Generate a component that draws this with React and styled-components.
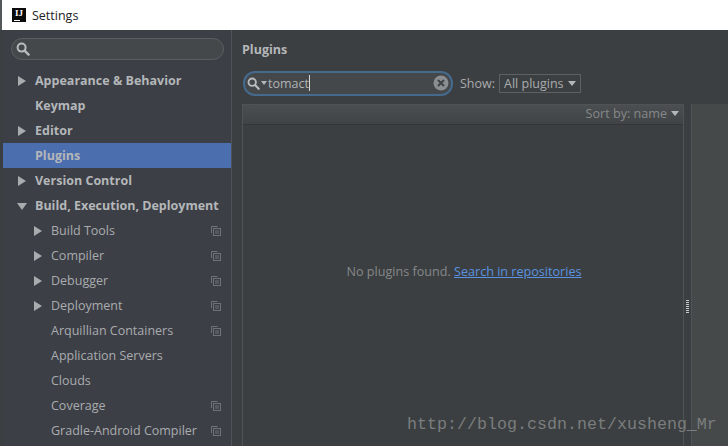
import React from 'react';
import styled, { createGlobalStyle } from 'styled-components';

const GlobalStyle = createGlobalStyle`
  html, body {
    margin: 0;
    padding: 0;
    width: 728px;
    height: 446px;
    overflow: hidden;
    background: #3c3f41;
    font-family: "Open Sans", "Noto Sans", "Liberation Sans", sans-serif;
  }
`;

const topItems = [
  { label: 'Appearance & Behavior', arrow: 'right' },
  { label: 'Keymap' },
  { label: 'Editor', arrow: 'right' },
  { label: 'Plugins', selected: true },
  { label: 'Version Control', arrow: 'right' },
  { label: 'Build, Execution, Deployment', arrow: 'down' },
];

const subItems = [
  { label: 'Build Tools', arrow: 'right', copy: true },
  { label: 'Compiler', arrow: 'right', copy: true },
  { label: 'Debugger', arrow: 'right', copy: true },
  { label: 'Deployment', arrow: 'right', copy: true },
  { label: 'Arquillian Containers', copy: true },
  { label: 'Application Servers' },
  { label: 'Clouds' },
  { label: 'Coverage', copy: true },
  { label: 'Gradle-Android Compiler', copy: true },
];

const SearchIcon = ({ size = 14, color = '#b9bcbe' }) => (
  <svg width={size} height={size} viewBox="0 0 14 14" fill="none">
    <circle cx="5.6" cy="5.6" r="4" stroke={color} strokeWidth="2" />
    <path d="M8.6 8.6L12.6 12.6" stroke={color} strokeWidth="2.4" strokeLinecap="round" />
  </svg>
);

const ProjectIcon = () => (
  <svg width="10" height="10" viewBox="0 0 10 10" fill="none" stroke="#6f7377">
    <path d="M6.5 0.5H0.5V7" />
    <rect x="2.5" y="2.5" width="7" height="7" />
    <path d="M4 5h4M4 7h4" />
  </svg>
);

const ClearIcon = () => (
  <svg width="16" height="16" viewBox="0 0 16 16">
    <circle cx="8" cy="8" r="7.5" fill="#8b8e90" />
    <path d="M5 5l6 6M11 5l-6 6" stroke="#3f4244" strokeWidth="2" />
  </svg>
);

export default function App() {
  return (
    <Window>
      <GlobalStyle />
      <TitleBar>
        <Logo>
          IJ
          <LogoBar />
        </Logo>
        <TitleText>Settings</TitleText>
      </TitleBar>
      <Body>
        <Sidebar>
          <SideSearch>
            <SearchIcon />
          </SideSearch>
          <Tree>
            {topItems.map(item => (
              <Row key={item.label} selected={item.selected}>
                <Arrow dir={item.arrow} />
                <TopLabel>{item.label}</TopLabel>
              </Row>
            ))}
            {subItems.map(item => (
              <SubRow key={item.label}>
                <Arrow dir={item.arrow} />
                <SubLabel>{item.label}</SubLabel>
                {item.copy && (
                  <CopyBox>
                    <ProjectIcon />
                  </CopyBox>
                )}
              </SubRow>
            ))}
          </Tree>
        </Sidebar>
        <Main>
          <Heading>Plugins</Heading>
          <Toolbar>
            <SearchField>
              <SearchIcon size={13} />
              <SmallCaret />
              <SearchText>tomact</SearchText>
              <Cursor />
              <ClearSlot>
                <ClearIcon />
              </ClearSlot>
            </SearchField>
            <ShowLabel>Show:</ShowLabel>
            <ShowSelect>
              All plugins
              <BigCaret />
            </ShowSelect>
          </Toolbar>
          <Content>
            <ListPanel>
              <ListHeader>
                Sort by: name
                <BigCaret />
              </ListHeader>
              <EmptyArea>
                <EmptyText>
                  No plugins found. <RepoLink>Search in repositories</RepoLink>
                </EmptyText>
              </EmptyArea>
            </ListPanel>
            <Splitter>
              <Grip />
            </Splitter>
            <DetailPanel />
          </Content>
        </Main>
      </Body>
      <Watermark>http://blog.csdn.net/xusheng_Mr</Watermark>
    </Window>
  );
}

const Window = styled.div`
  position: relative;
  width: 728px;
  height: 446px;
  overflow: hidden;
  display: flex;
  flex-direction: column;
`;

const TitleBar = styled.div`
  height: 30px;
  flex: none;
  display: flex;
  align-items: center;
  padding-left: 10px;
  gap: 6px;
  background: #ffffff;
  border-left: 2px solid #55585a;
  box-sizing: border-box;
`;

const Logo = styled.div`
  position: relative;
  width: 14px;
  height: 14px;
  background: #0b0b0b;
  color: #ffffff;
  font: bold 9px/11px "Liberation Serif", serif;
  text-align: center;
`;

const LogoBar = styled.span`
  position: absolute;
  left: 2px;
  bottom: 1px;
  width: 6px;
  height: 1px;
  background: #ffffff;
`;

const TitleText = styled.span`
  font-size: 12.5px;
  color: #222222;
`;

const Body = styled.div`
  flex: 1;
  display: flex;
  min-height: 0;
`;

const Sidebar = styled.div`
  width: 229px;
  flex: none;
  box-sizing: border-box;
  margin-left: 3px;
  background: #3d3f46;
  border-right: 1px solid #505356;
`;

const SideSearch = styled.div`
  margin: 8px 7px 0 8px;
  height: 22px;
  box-sizing: border-box;
  border: 1px solid #5c5f61;
  border-radius: 11px;
  background: #45484a;
  display: flex;
  align-items: center;
  padding-left: 4px;
`;

const Tree = styled.div`
  margin-top: 8px;
`;

const Row = styled.div`
  height: 25px;
  display: flex;
  align-items: center;
  padding-left: 14px;
  background: ${p => (p.selected ? '#4b6eaf' : 'transparent')};
`;

const SubRow = styled(Row)`
  padding-left: 30px;
`;

const Arrow = styled.span`
  width: 18px;
  flex: none;
  height: 10px;
  position: relative;
  &::before {
    content: '';
    position: absolute;
    display: ${p => (p.dir ? 'block' : 'none')};
    left: ${p => (p.dir === 'down' ? '0' : '1px')};
    top: ${p => (p.dir === 'down' ? '2px' : '0')};
    border-style: solid;
    border-color: transparent;
    ${p =>
      p.dir === 'down'
        ? 'border-width: 7px 5px 0 5px; border-top-color: #a9acae;'
        : 'border-width: 5px 0 5px 8px; border-left-color: #a9acae;'}
  }
`;

const TopLabel = styled.span`
  font-size: 12.5px;
  font-weight: 700;
  color: #b4b7b9;
  white-space: nowrap;
`;

const SubLabel = styled.span`
  font-size: 12.5px;
  color: #a9acae;
  white-space: nowrap;
  flex: 1;
`;

const CopyBox = styled.span`
  display: flex;
  width: 10px;
  margin-right: 10px;
`;

const Main = styled.div`
  flex: 1;
  min-width: 0;
  background: #3c3f41;
  padding-left: 10px;
`;

const Heading = styled.div`
  margin-top: 11px;
  font-size: 12.5px;
  line-height: 17px;
  font-weight: 700;
  color: #b4b7b9;
`;

const Toolbar = styled.div`
  margin-top: 12px;
  display: flex;
  align-items: center;
  height: 26px;
`;

const SearchField = styled.div`
  width: 210px;
  height: 25px;
  box-sizing: border-box;
  margin-left: 1px;
  border: 2px solid #446a8e;
  border-radius: 12px;
  background: #45484a;
  display: flex;
  align-items: center;
  padding-left: 2px;
`;

const SmallCaret = styled.span`
  display: inline-block;
  margin-left: 1px;
  border-style: solid;
  border-color: transparent;
  border-width: 4px 3px 0 3px;
  border-top-color: #b4b7b9;
`;

const BigCaret = styled(SmallCaret)`
  margin-left: 4px;
  border-width: 5px 4px 0 4px;
`;

const SearchText = styled.span`
  margin-left: 1px;
  font-size: 12.5px;
  color: #b0b3b5;
`;

const Cursor = styled.span`
  width: 1px;
  height: 16px;
  background: #d4d6d8;
`;

const ClearSlot = styled.span`
  display: flex;
  margin-left: auto;
  margin-right: 2px;
`;

const ShowLabel = styled.span`
  margin-left: 7px;
  font-size: 12.5px;
  color: #a9acae;
`;

const ShowSelect = styled.div`
  margin-left: 4px;
  height: 19px;
  box-sizing: border-box;
  padding: 0 4px 0 4px;
  border: 1px solid #5e6163;
  display: flex;
  align-items: center;
  font-size: 12.5px;
  color: #a9acae;
`;

const Content = styled.div`
  margin-top: 8px;
  display: flex;
  height: 400px;
`;

const ListPanel = styled.div`
  width: 442px;
  flex: none;
  box-sizing: border-box;
  border: 1px solid #505356;
  border-bottom: none;
  display: flex;
  flex-direction: column;
`;

const ListHeader = styled.div`
  height: 20px;
  flex: none;
  box-sizing: border-box;
  padding: 0 4px 2px 0;
  background: linear-gradient(#4b4e50, #414446);
  border-bottom: 1px solid #333537;
  display: flex;
  align-items: center;
  justify-content: flex-end;
  font-size: 12.6px;
  color: #85888a;
`;

const EmptyArea = styled.div`
  flex: 1;
  padding: 138px 0 0 2px;
  text-align: center;
`;

const EmptyText = styled.div`
  font-size: 12.6px;
  line-height: 17px;
  color: #85888a;
  white-space: nowrap;
`;

const RepoLink = styled.span`
  color: #5a93e0;
  text-decoration: underline;
`;

const Splitter = styled.div`
  width: 7px;
  flex: none;
  position: relative;
`;

const Grip = styled.span`
  position: absolute;
  left: 2px;
  top: 196px;
  width: 3px;
  height: 13px;
  background: repeating-linear-gradient(#c8cacb 0 1px, #3c3f41 1px 2px);
`;

const DetailPanel = styled.div`
  flex: 1;
  background: #45494a;
  border-left: 1px solid #505356;
`;

const Watermark = styled.div`
  position: absolute;
  left: 407px;
  top: 415px;
  font-family: "Liberation Mono", monospace;
  font-size: 16.67px;
  line-height: 20px;
  color: #7a7d7e;
  white-space: nowrap;
`;
